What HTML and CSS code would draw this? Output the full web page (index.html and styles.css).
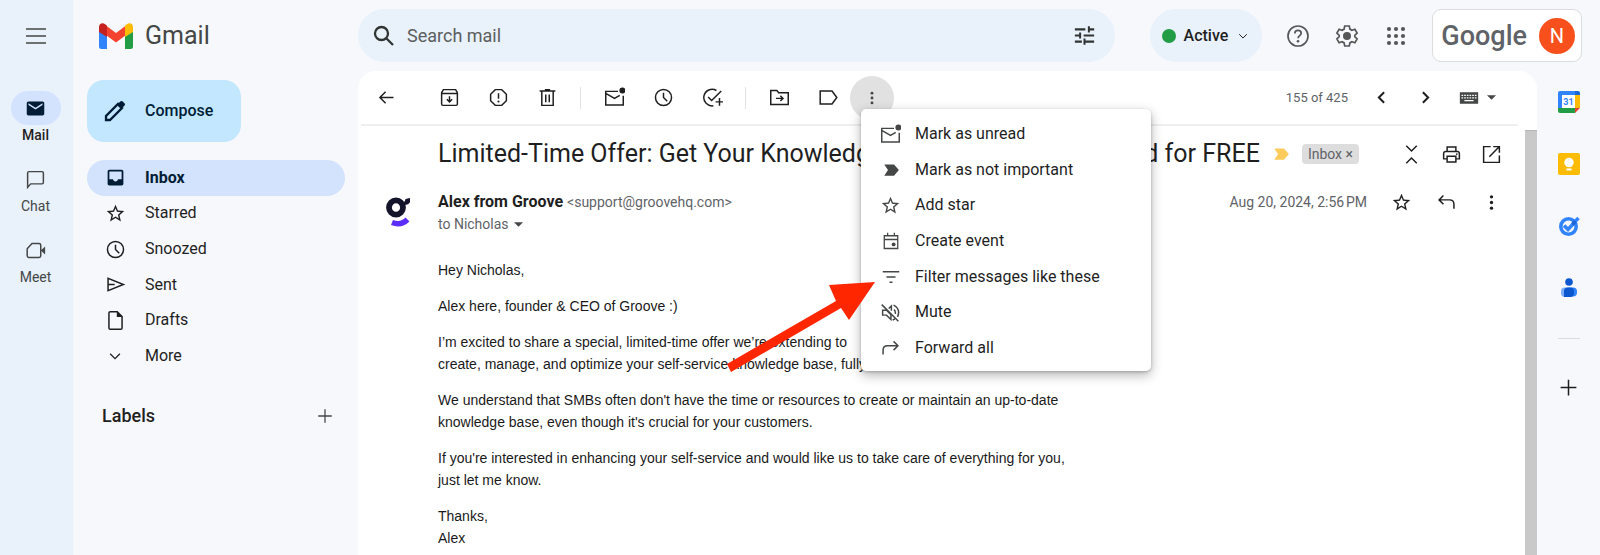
FILE: index.html
```html
<!DOCTYPE html>
<html lang="en">
<head>
<meta charset="utf-8">
<title>Gmail</title>
<link rel="stylesheet" href="styles.css">
</head>
<body>
<svg class="sprite" aria-hidden="true">
  <symbol id="i-menu" viewBox="0 0 24 24"><path d="M2 5h20M2 12h20M2 19h20" class="s"/></symbol>
  <symbol id="i-mail" viewBox="0 0 24 24"><path d="M20 4H4c-1.1 0-2 .9-2 2v12c0 1.100.9 2 2 2h16c1.100 0 2-.9 2-2V6c0-1.100-.9-2-2-2zm0 4-8 5-8-5V6l8 5 8-5z"/></symbol>
  <symbol id="i-chat" viewBox="0 0 24 24"><path d="M3 21V4.500Q3 3 4.500 3h15Q21 3 21 4.500v11q0 1.500-1.500 1.500H6.500z" class="s"/></symbol>
  <symbol id="i-meet" viewBox="0 0 24 24"><path d="M8 4h8q2 0 2 2v12q0 2-2 2H4.500q-2 0-2-2V10z" class="s"/><path d="M18 12l5-4.500v9z"/></symbol>
  <symbol id="i-pencil" viewBox="0 0 24 24"><path d="M3 21v-4L15 5l4 4L7 21z" class="s w"/><path d="M14 6l3.200-3.400q1.300-1.200 2.600 0l1.600 1.600q1.300 1.300 0 2.600L18 10z"/></symbol>
  <symbol id="i-inbox" viewBox="0 0 24 24"><path d="M19 3H5c-1.100 0-2 .9-2 2v14c0 1.100.9 2 2 2h14c1.100 0 2-.9 2-2V5c0-1.100-.9-2-2-2zm0 11h-4q-1 2.500-3 2.500T9 14H5V5h14z"/></symbol>
  <symbol id="i-star" viewBox="0 0 24 24"><path d="M22 9.240l-7.190-.62L12 2 9.190 8.630 2 9.240l5.460 4.730L5.820 21 12 17.270 18.180 21l-1.630-7.030L22 9.240zM12 15.400l-3.760 2.270 1-4.280-3.320-2.880 4.380-.38L12 6.100l1.710 4.040 4.380.38-3.320 2.880 1 4.280L12 15.400z"/></symbol>
  <symbol id="i-clock" viewBox="0 0 24 24"><circle cx="12" cy="12" r="9.200" class="s"/><path d="M12 6.500V12l4.300 4.300" class="s"/></symbol>
  <symbol id="i-send" viewBox="0 0 24 24"><path d="M3.500 5v14L21 12zM4 12h7" class="s"/></symbol>
  <symbol id="i-file" viewBox="0 0 24 24"><path d="M14 2H6q-1.500 0-1.500 1.500v17Q4.500 22 6 22h12q1.500 0 1.500-1.500v-13z" class="s"/><path d="M13.500 1.500v6.500h6.500z"/></symbol>
  <symbol id="i-down" viewBox="0 0 24 24"><path d="M5.500 9l6.500 6.500L18.500 9" class="s"/></symbol>
  <symbol id="i-plus" viewBox="0 0 24 24"><path d="M12 3v18M3 12h18" class="s"/></symbol>
  <symbol id="i-search" viewBox="0 0 24 24"><circle cx="9.500" cy="9.500" r="6.500" class="s w"/><path d="M14 14l7 7" class="s w"/></symbol>
  <symbol id="i-tune" viewBox="0 0 24 24"><path d="M1 5h12M17 5h6M17 1.500v7M1 12h6M7 8.500v7M11 12h12M1 19h8M12 15.500v7M12 19h11" class="s w"/></symbol>
  <symbol id="i-help" viewBox="0 0 24 24"><circle cx="12" cy="12" r="10" class="s"/><path d="M8.800 9.500q0-3.200 3.200-3.200t3.200 2.900c0 2.300-3.100 2.500-3.100 5" class="s"/><circle cx="12" cy="17.300" r="1.300"/></symbol>
  <symbol id="i-gear" viewBox="0 0 24 24"><path d="M9.700 2h4.600l.6 3.100 2 1.200 3-1 2.200 3.900-2.300 2.100v1.400l2.300 2.100-2.200 3.900-3-1-2 1.200-.6 3.100H9.700l-.6-3.100-2-1.200-3 1-2.200-3.900 2.300-2.100v-1.400L1.900 9.200l2.200-3.900 3 1 2-1.200z" class="s"/><circle cx="12" cy="12" r="4"/></symbol>
  <symbol id="i-apps" viewBox="0 0 24 24"><g><circle cx="5" cy="5" r="2.100"/><circle cx="12" cy="5" r="2.100"/><circle cx="19" cy="5" r="2.100"/><circle cx="5" cy="12" r="2.100"/><circle cx="12" cy="12" r="2.100"/><circle cx="19" cy="12" r="2.100"/><circle cx="5" cy="19" r="2.100"/><circle cx="12" cy="19" r="2.100"/><circle cx="19" cy="19" r="2.100"/></g></symbol>
  <symbol id="i-back" viewBox="0 0 24 24"><path d="M20 12H5M11 5.500 4.500 12l6.500 6.500" class="s"/></symbol>
  <symbol id="i-archive" viewBox="0 0 24 24"><path d="M3 6.500V19.500Q3 21 4.500 21h15q1.500 0 1.500-1.500v-13L19 3H5zM3 7.500h18M12 10.500v6M9 14l3 3 3-3" class="s"/></symbol>
  <symbol id="i-spam" viewBox="0 0 24 24"><path d="M8.300 3h7.400L21 8.300v7.400L15.700 21H8.300L3 15.700V8.300zM12 7v6.500" class="s"/><circle cx="12" cy="16.500" r="1.200"/></symbol>
  <symbol id="i-trash" viewBox="0 0 24 24"><path d="M3 4.500h18M9 3h6M5.500 4.500V21h13V4.500M10 8.500v9M14 8.500v9" class="s"/></symbol>
  <symbol id="i-unread" viewBox="0 0 24 24"><path d="M16 5H2v15.500h20V10M2.500 7.500 12 13l6-3.500" class="s"/><circle cx="21" cy="4" r="3.400"/></symbol>
  <symbol id="i-task" viewBox="0 0 24 24"><path d="M16.500 4A9.500 9.500 0 1 0 13 21.500M7 11.500l4 4L22 4.500M20 12.500v9M15.500 17h9" class="s"/></symbol>
  <symbol id="i-move" viewBox="0 0 24 24"><path d="M2 4h7l2 2.500h11V20H2zM8 13h8M13 10l3 3-3 3" class="s"/></symbol>
  <symbol id="i-label" viewBox="0 0 24 24"><path d="M2.500 4.500h13.500L21.500 12l-5.500 7.500H2.500z" class="s"/></symbol>
  <symbol id="i-more" viewBox="0 0 24 24"><circle cx="12" cy="5.500" r="1.900"/><circle cx="12" cy="12" r="1.900"/><circle cx="12" cy="18.500" r="1.900"/></symbol>
  <symbol id="i-prev" viewBox="0 0 24 24"><path d="M15 6l-6 6 6 6" class="s w"/></symbol>
  <symbol id="i-next" viewBox="0 0 24 24"><path d="M9 6l6 6-6 6" class="s w"/></symbol>
  <symbol id="i-keyboard" viewBox="0 0 24 14"><path fill-rule="evenodd" d="M1 0h22v14H1zM3 3h2v1.500H3zm3.200 0h2v1.500h-2zm3.200 0h2v1.500h-2zm3.200 0h2v1.500h-2zm3.200 0h2v1.500h-2zm3.200 0h2v1.500h-2zM3 6h2v1.500H3zm3.200 0h2v1.500h-2zm3.200 0h2v1.500h-2zm3.200 0h2v1.500h-2zm3.200 0h2v1.500h-2zm3.200 0h2v1.500h-2zM6.500 9.500h11V11h-11z"/></symbol>
  <symbol id="i-caret" viewBox="0 0 10 5"><path d="M0 0h10L5 5z"/></symbol>
  <symbol id="i-important" viewBox="0 0 24 24"><path d="M3 4.500h13l6.500 7.500-6.500 7.500H3l5-7.500z"/></symbol>
  <symbol id="i-collapse" viewBox="0 0 24 24"><path d="M6 2l6 6 6-6M6 22l6-6 6 6" class="s"/></symbol>
  <symbol id="i-print" viewBox="0 0 24 24"><path d="M7 8V3.500h10V8M7 17H3V11q0-2.500 2.500-2.500h13Q21 8.500 21 11v6h-4M7 14h10v6.500H7z" class="s"/><circle cx="18" cy="11.500" r="1"/></symbol>
  <symbol id="i-open" viewBox="0 0 24 24"><path d="M11 3H3v18h18V13M14 3h7V10M20.500 3.500 9.500 14.500" class="s"/></symbol>
  <symbol id="i-reply" viewBox="0 0 24 24"><path d="M8.500 4 3.500 9l5 5M4 9h11.500q5 0 5 5v5" class="s"/></symbol>
  <symbol id="i-forward" viewBox="0 0 24 24"><path d="M15.500 5l5 5-5 5M20 10H8.500q-5 0-5 5v5" class="s"/></symbol>
  <symbol id="i-event" viewBox="0 0 24 24"><path d="M3 5h18v17H3zM3 10h18M7.500 1v4M16.500 1v4" class="s"/><circle cx="15.500" cy="16.500" r="2.600"/></symbol>
  <symbol id="i-filter" viewBox="0 0 24 24"><path d="M1 5h22M6 12h12M10 19h4" class="s w"/></symbol>
  <symbol id="i-mute" viewBox="0 0 24 24"><path d="M2 3l19 19M3 9.500h4.500l5 5V20l-5-5H3zM10 7.500l3-3V10M16 8.500q2 1.800 1.500 5M15.500 3.500Q24 8 20 17M14.500 20.500l2.500-1" class="s"/></symbol>
</svg>

<div class="app">
  <nav class="rail" aria-label="Apps">
    <button class="icon-btn rail-menu" aria-label="Main menu"><svg class="ic i24"><use href="#i-menu"/></svg></button>
    <a class="rail-item on" href="#mail"><span class="rail-icon"><svg class="ic"><use href="#i-mail"/></svg></span>Mail</a>
    <a class="rail-item" href="#chat"><span class="rail-icon"><svg class="ic"><use href="#i-chat"/></svg></span>Chat</a>
    <a class="rail-item" href="#meet"><span class="rail-icon"><svg class="ic"><use href="#i-meet"/></svg></span>Meet</a>
  </nav>

  <div class="page">
    <header class="top">
      <div class="brand">
        <svg class="brand-logo" viewBox="0 0 34 26" aria-hidden="true">
          <path fill="#3284fc" d="M0 7l8 6v13H2.500Q0 26 0 23.500z"/>
          <path fill="#229c45" d="M34 7l-8 6v13h5.500q2.500 0 2.500-2.500z"/>
          <path fill="#f4432f" d="M7 2.500l10 7.500 10-7.500V12l-10 7.500L7 12z"/>
          <path fill="#c5221f" d="M0 9V4C0 .5 3.500-1 6.500 1.500L8 2.800V14z"/>
          <path fill="#fcbc04" d="M34 9V4c0-3.500-3.500-5-6.500-2.500L26 2.800V14z"/>
        </svg>
        <span>Gmail</span>
      </div>
      <form class="search">
        <button class="icon-btn" type="button" aria-label="Search"><svg class="ic i24"><use href="#i-search"/></svg></button>
        <input type="text" placeholder="Search mail" aria-label="Search mail">
        <button class="icon-btn" type="button" aria-label="Search options"><svg class="ic"><use href="#i-tune"/></svg></button>
      </form>
      <div class="account">
        <button class="status"><span class="dot"></span>Active<svg class="ic i14"><use href="#i-down"/></svg></button>
        <div class="tools">
          <button class="icon-btn" aria-label="Support"><svg class="ic i24"><use href="#i-help"/></svg></button>
          <button class="icon-btn" aria-label="Settings"><svg class="ic i24"><use href="#i-gear"/></svg></button>
          <button class="icon-btn" aria-label="Google apps"><svg class="ic i24"><use href="#i-apps"/></svg></button>
        </div>
        <button class="profile"><span class="google">Google</span><span class="avatar">N</span></button>
      </div>
    </header>

    <div class="body">
      <aside class="side">
        <button class="compose"><svg class="ic i24"><use href="#i-pencil"/></svg>Compose</button>
        <nav class="folders" aria-label="Folders">
          <a class="on" href="#inbox"><svg class="ic"><use href="#i-inbox"/></svg>Inbox</a>
          <a href="#starred"><svg class="ic"><use href="#i-star"/></svg>Starred</a>
          <a href="#snoozed"><svg class="ic"><use href="#i-clock"/></svg>Snoozed</a>
          <a href="#sent"><svg class="ic"><use href="#i-send"/></svg>Sent</a>
          <a href="#drafts"><svg class="ic"><use href="#i-file"/></svg>Drafts</a>
          <a href="#more"><svg class="ic i18"><use href="#i-down"/></svg>More</a>
        </nav>
        <div class="labels"><h2>Labels</h2><button class="icon-btn" aria-label="Create new label"><svg class="ic i18"><use href="#i-plus"/></svg></button></div>
      </aside>

      <main class="card">
        <div class="toolbar">
          <button class="icon-btn back" aria-label="Back"><svg class="ic"><use href="#i-back"/></svg></button>
          <button class="icon-btn" aria-label="Archive"><svg class="ic"><use href="#i-archive"/></svg></button>
          <button class="icon-btn" aria-label="Report spam"><svg class="ic"><use href="#i-spam"/></svg></button>
          <button class="icon-btn" aria-label="Delete"><svg class="ic"><use href="#i-trash"/></svg></button>
          <span class="sep"></span>
          <button class="icon-btn" aria-label="Mark as unread"><svg class="ic"><use href="#i-unread"/></svg></button>
          <button class="icon-btn" aria-label="Snooze"><svg class="ic"><use href="#i-clock"/></svg></button>
          <button class="icon-btn" aria-label="Add to tasks"><svg class="ic"><use href="#i-task"/></svg></button>
          <span class="sep"></span>
          <button class="icon-btn" aria-label="Move to"><svg class="ic"><use href="#i-move"/></svg></button>
          <button class="icon-btn" aria-label="Labels"><svg class="ic"><use href="#i-label"/></svg></button>
          <div class="more">
            <button class="more-btn" aria-label="More" aria-expanded="true"><svg class="ic i18"><use href="#i-more"/></svg></button>
            <div class="menu" role="menu">
              <button role="menuitem"><svg class="ic"><use href="#i-unread"/></svg>Mark as unread</button>
              <button role="menuitem"><svg class="ic i18"><use href="#i-important"/></svg>Mark as not important</button>
              <button role="menuitem"><svg class="ic"><use href="#i-star"/></svg>Add star</button>
              <button role="menuitem"><svg class="ic i18"><use href="#i-event"/></svg>Create event</button>
              <button role="menuitem"><svg class="ic i18"><use href="#i-filter"/></svg>Filter messages like these</button>
              <button role="menuitem"><svg class="ic"><use href="#i-mute"/></svg>Mute</button>
              <button role="menuitem"><svg class="ic"><use href="#i-forward"/></svg>Forward all</button>
            </div>
            <svg class="pointer" viewBox="0 0 148 90" aria-hidden="true"><path d="M148 0 122 38 114 26 4 90 0 82 109 19 102 3z"/></svg>
          </div>
          <div class="pager">
            <span class="count">155 of 425</span>
            <button class="icon-btn" aria-label="Newer"><svg class="ic"><use href="#i-prev"/></svg></button>
            <button class="icon-btn" aria-label="Older"><svg class="ic"><use href="#i-next"/></svg></button>
            <button class="input-tool" aria-label="Input tools"><svg class="keys"><use href="#i-keyboard"/></svg><svg class="caret"><use href="#i-caret"/></svg></button>
          </div>
        </div>

        <div class="scroll">
          <article class="message">
            <div class="subject">
              <h1>Limited-Time Offer: Get Your Knowledge Base Built and Designed for FREE</h1>
              <svg class="ic i18 mark"><use href="#i-important"/></svg>
              <button class="chip">Inbox <span>×</span></button>
              <div class="actions">
                <button class="icon-btn" aria-label="Collapse all"><svg class="ic"><use href="#i-collapse"/></svg></button>
                <button class="icon-btn" aria-label="Print all"><svg class="ic"><use href="#i-print"/></svg></button>
                <button class="icon-btn" aria-label="In new window"><svg class="ic"><use href="#i-open"/></svg></button>
              </div>
            </div>
            <div class="sender">
              <svg class="groove" viewBox="0 0 24 30" aria-hidden="true"><ellipse cx="10" cy="10.500" rx="7" ry="7.200" fill="none" stroke="#14142b" stroke-width="5.800"/><path fill="#14142b" d="M15 6q4 0 4.500-4L24 1v4q-1 3-6 3z"/><path fill="none" stroke="#5b2dfa" stroke-width="5.500" d="M6 25.500q9 3.500 15.500-3"/></svg>
              <div class="who">
                <div class="from"><strong>Alex from Groove</strong> <span>&lt;support@groovehq.com&gt;</span></div>
                <button class="to">to Nicholas<svg class="caret"><use href="#i-caret"/></svg></button>
              </div>
              <time class="date">Aug 20, 2024, 2:56&#8239;PM</time>
              <div class="actions">
                <button class="icon-btn" aria-label="Star"><svg class="ic"><use href="#i-star"/></svg></button>
                <button class="icon-btn" aria-label="Reply"><svg class="ic"><use href="#i-reply"/></svg></button>
                <button class="icon-btn" aria-label="More"><svg class="ic"><use href="#i-more"/></svg></button>
              </div>
            </div>
            <div class="text">
              <p>Hey Nicholas,</p>
              <p>Alex here, founder &amp; CEO of Groove :)</p>
              <p>I’m excited to share a special, limited-time offer we’re extending to<br>create, manage, and optimize your self-service knowledge base, fully</p>
              <p>We understand that SMBs often don't have the time or resources to create or maintain an up-to-date<br>knowledge base, even though it's crucial for your customers.</p>
              <p>If you're interested in enhancing your self-service and would like us to take care of everything for you,<br>just let me know.</p>
              <p>Thanks,<br>Alex</p>
            </div>
          </article>
          <div class="scrollbar"></div>
        </div>
      </main>

      <aside class="panel" aria-label="Side panel">
        <button class="icon-btn" aria-label="Calendar"><svg class="app-ic" viewBox="0 0 22 22"><path fill="#fff" d="M4 4h13v13H4z"/><path fill="#3284fc" d="M2 0h16v4H4v14H0V2Q0 0 2 0z"/><path fill="#1967d2" d="M17 0h3q2 0 2 2v2h-5z"/><path fill="#fcbc04" d="M17 4h5v13h-5z"/><path fill="#229c45" d="M0 17h17v5H2q-2 0-2-2z"/><path fill="#ea4335" d="M17 17h5l-5 5z"/><text x="10.500" y="14" class="cal-day">31</text></svg></button>
        <button class="icon-btn" aria-label="Keep"><svg class="app-ic" viewBox="0 0 22 22"><rect width="22" height="22" rx="2" fill="#fcbc04"/><circle cx="11" cy="9.500" r="4.700" fill="#fff"/><path fill="#fff" d="M8.500 11h5v3h-5zM8.500 15.500h5v2h-5z"/></svg></button>
        <button class="icon-btn" aria-label="Tasks"><svg class="app-ic" viewBox="0 0 22 22"><circle cx="10.500" cy="11.500" r="7.700" fill="none" stroke="#3284fc" stroke-width="3.600"/><path fill="none" stroke="#3284fc" stroke-width="3.600" d="M6 10.500l4 4 6-6.500"/><path fill="none" stroke="#1a66d6" stroke-width="3.600" d="M14.500 9.500l3-3.500"/><path fill="none" stroke="#3284fc" stroke-width="3.600" d="M17.500 6l3-3"/></svg></button>
        <button class="icon-btn" aria-label="Contacts"><svg class="app-ic" viewBox="0 0 22 22"><circle cx="11" cy="5" r="3.800" fill="#0b57d0"/><rect x="3" y="10.500" width="12" height="9.500" rx="4" fill="#7baaf7"/><rect x="9" y="10.500" width="10" height="9" rx="4" fill="#3284fc"/><path fill="#0b57d0" d="M6 20v-6q0-3.500 4-3.500h2q4 0 4 3.500v2q0 4-4 4z"/></svg></button>
        <hr>
        <button class="icon-btn" aria-label="Get add-ons"><svg class="ic"><use href="#i-plus"/></svg></button>
      </aside>
    </div>
  </div>
</div>
</body>
</html>
```
FILE: styles.css
```css
* { box-sizing: border-box; }
body {
  margin: 0;
  font: 16px/22px Roboto, "Liberation Sans", sans-serif;
  color: #1f1f1f;
  background: #f7f8fc;
}
button, input { font: inherit; color: inherit; }
button { border: 0; padding: 0; background: none; }
a { color: inherit; text-decoration: none; }
h1, h2, p { margin: 0; font-weight: 400; }

.sprite { display: none; }
.ic { width: 21px; height: 21px; fill: currentColor; flex: none; }
.i14 { width: 14px; height: 14px; }
.i18 { width: 18px; height: 18px; }
.i24 { width: 24px; height: 24px; }
.s { fill: none; stroke: currentColor; stroke-width: 1.7; }
.w { stroke-width: 2.3; }
.icon-btn { display: flex; align-items: center; justify-content: center; flex: none; }

.app { display: flex; height: 100vh; overflow: hidden; }

.rail {
  flex: none;
  width: 73px;
  padding-right: 2px;
  display: flex;
  flex-direction: column;
  align-items: center;
  background: #e9f1fb;
}
.rail-menu { height: 71px; margin-bottom: 20px; color: #444746; }
.rail-item {
  display: flex;
  flex-direction: column;
  align-items: center;
  height: 71px;
  font-size: 14px;
  line-height: 20px;
  color: #444746;
}
.rail-icon { display: flex; align-items: center; justify-content: center; width: 50px; height: 34px; border-radius: 17px; }
.rail-item.on { font-weight: 500; color: #1f1f1f; }
.on .rail-icon { background: #d3e3fd; color: #001d35; }

.page { flex: 1; min-width: 0; display: flex; flex-direction: column; }

.top { display: flex; align-items: center; height: 71px; padding-right: 18px; flex: none; }
.brand { width: 285px; flex: none; padding-left: 26px; display: flex; align-items: center; gap: 12px; font-size: 25px; line-height: 32px; color: #444746; }
.brand-logo { width: 34px; height: 26px; }
.search {
  flex: 0 1 757px;
  display: flex;
  align-items: center;
  gap: 11px;
  height: 53px;
  padding: 0 20px 0 14px;
  border-radius: 27px;
  background: #e9f1fb;
  color: #303433;
}
.search input { flex: 1; min-width: 0; border: 0; padding: 0; background: none; font-size: 18px; }
.search input::placeholder { color: #5b5e5d; opacity: 1; }

.account { margin-left: auto; display: flex; align-items: center; }
.status { display: flex; align-items: center; gap: 8px; height: 53px; padding: 0 12px; border-radius: 27px; background: #e9f1fb; font-weight: 500; }
.dot { width: 14px; height: 14px; border-radius: 50%; background: #229c45; }
.tools { display: flex; gap: 25px; padding: 0 24px; color: #555857; }
.profile { display: flex; align-items: center; gap: 12px; height: 53px; padding: 0 6px 0 8px; border: 1px solid #dadce0; border-radius: 9px; background: #fff; }
.google { font-size: 27px; line-height: 32px; font-weight: 500; color: #5f6368; }
.avatar { width: 36px; height: 36px; border-radius: 50%; background: #f8501c; color: #fff; font-size: 20px; line-height: 36px; text-align: center; }

.body { flex: 1; min-height: 0; display: flex; }

.side { flex: none; width: 285px; padding: 9px 13px 0 14px; }
.compose { display: flex; align-items: center; gap: 18px; height: 62px; padding: 0 28px 0 16px; border-radius: 17px; background: #c2e7ff; color: #001d35; font-weight: 500; }
.folders { display: grid; grid-auto-rows: 1fr; height: 214px; margin-top: 18px; }
.folders a { display: flex; align-items: center; padding-left: 18px; gap: 19px; border-radius: 18px; }
.folders .i18 { margin: 0 2px 0 1px; }
.folders .on { background: #d3e3fd; color: #001d35; font-weight: 700; }
.labels { display: flex; align-items: center; justify-content: space-between; margin-top: 31px; padding: 0 11px 0 15px; color: #444746; }
.labels h2 { font-size: 18px; line-height: 22px; font-weight: 500; color: #1f1f1f; }

.card { flex: 1; min-width: 0; display: flex; flex-direction: column; background: #fff; border-radius: 18px 18px 0 0; }
.toolbar { position: relative; z-index: 1; display: flex; align-items: center; gap: 28px; flex: none; height: 55px; margin: 0 19px 4px 3px; padding-left: 15px; border-bottom: 2px solid #eeeff0; }
.back { margin-right: 14px; }
.sep { width: 1px; height: 22px; background: #e0e2e3; margin: 0 -5px 0 -6px; }
.more { position: relative; margin-left: -17px; }
.more-btn { display: flex; align-items: center; justify-content: center; width: 44px; height: 44px; border-radius: 50%; background: #e1e1e1; color: #444746; }
.menu {
  position: absolute;
  left: 11px;
  top: 33px;
  width: 290px;
  height: 262px;
  padding: 8px 0 5px;
  display: grid;
  grid-auto-rows: 1fr;
  border-radius: 5px;
  background: #fff;
  box-shadow: 0 4px 12px rgba(0, 0, 0, .3), 0 1px 3px rgba(0, 0, 0, .2);
}
.menu button { display: flex; align-items: center; gap: 14px; padding-left: 19px; text-align: left; color: #1f1f1f; }
.menu svg { color: #444746; }
.menu .i18 { margin: 0 1px 0 2px; }
.pointer { position: absolute; left: -123px; top: 206px; width: 148px; height: 90px; fill: #ff2600; }
.pager { margin-left: auto; display: flex; align-items: center; gap: 23px; padding-right: 22px; }
.count, .date { font-size: 14px; color: #5f6368; white-space: nowrap; }
.count { font-size: 13px; }
.input-tool { display: flex; align-items: center; gap: 8px; color: #444746; }
.keys { width: 20px; height: 12px; fill: currentColor; }
.caret { width: 9px; height: 5px; fill: #444746; }

.scroll { flex: 1; min-height: 0; display: flex; overflow: hidden; }
.message { flex: 1; min-width: 0; padding: 8px 23px 0 80px; }
.scrollbar { flex: none; width: 12px; background: #c9c9c9; border-top: 1px solid #b5b5b5; }
.subject { display: flex; align-items: center; height: 32px; }
.subject h1 { font-size: 25px; line-height: 32px; white-space: nowrap; }
.mark { margin: 0 12px; color: #fbcb5c; }
.chip { height: 20px; padding: 0 6px; border-radius: 4px; background: #ddd; color: #5f6368; font-size: 14px; line-height: 20px; }
.actions { margin-left: auto; display: flex; gap: 19px; }
.sender { display: flex; margin-top: 21px; }
.sender .actions { margin-left: 24px; gap: 24px; height: 22px; }
.groove { width: 24px; height: 30px; margin: 6px 28px 0 -52px; }
.who { flex: 1; }
.from strong { font-weight: 700; }
.from span { font-size: 14px; color: #5f6368; }
.to { display: flex; align-items: center; gap: 5px; font-size: 14px; line-height: 22px; color: #5f6368; }
.text { display: flex; flex-direction: column; gap: 14px; margin-top: 24px; font: 14px/22px "Liberation Sans", Arial, sans-serif; color: #1a1a1a; white-space: nowrap; }

.panel { flex: none; width: 63px; display: flex; flex-direction: column; align-items: center; gap: 40px; padding-top: 20px; }
.app-ic { width: 22px; height: 22px; }
.cal-day { font: 700 9px Roboto, sans-serif; fill: #3284fc; text-anchor: middle; }
.panel hr { width: 22px; height: 1px; margin: -1px 0 -2px; border: 0; background: #dadce0; }
```
